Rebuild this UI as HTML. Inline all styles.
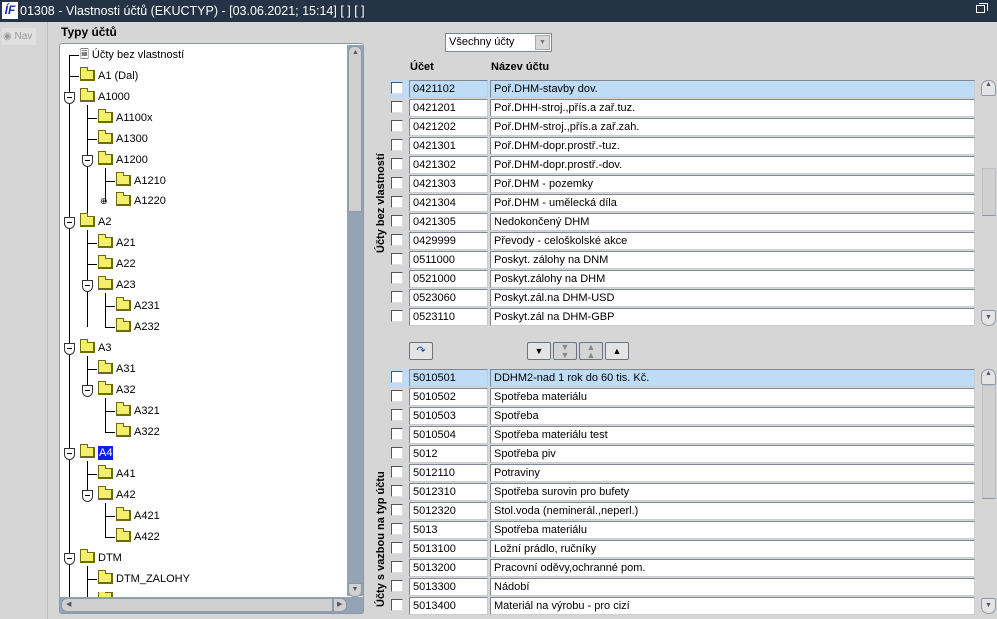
<!DOCTYPE html>
<html><head><meta charset="utf-8"><style>
*{margin:0;padding:0;box-sizing:border-box}
body{width:997px;height:619px;background:#d6d6d6;font-family:"Liberation Sans",Arial,sans-serif;font-size:11px;position:relative;overflow:hidden;color:#000}
.a{position:absolute}
#title{left:0;top:0;width:997px;height:22px;background:#243446;color:#fff;font-size:12.5px;line-height:22px;padding-left:20px;white-space:nowrap}
#logo{left:2px;top:2px;width:16px;height:17px;background:#fff;border:1px solid #fff;color:#1a2fb0;font-weight:bold;font-style:italic;font-size:12px;line-height:15px;text-align:center}
.tr{height:16px;line-height:16px;font-size:11px;white-space:nowrap}
.fo{display:inline-block;width:15px;height:11px;background:#f4ef6a;border:1px solid #6d6a10;border-right-width:2px;border-bottom-width:2px;vertical-align:-2px;margin-right:3px;position:relative}
.fo:before{content:"";position:absolute;left:-1px;top:-4px;width:6px;height:3px;background:#f4ef6a;border:1px solid #6d6a10;border-bottom:0}
.ln{background:#000}
.exp{width:11px;height:12px;border:1px solid #333;border-radius:0 0 6px 6px;background:#fff}
.exp:after{content:"";position:absolute;left:2px;top:4px;width:5px;height:1px;background:#000}
.cb{width:12px;height:12px;background:#fff;border:1px solid #555;border-right-color:#ddd;border-bottom-color:#ddd}
.c1,.c2{height:18px;background:#fff;border:1px solid #7d8796;border-right-color:#ccc;border-bottom-color:#ccc;line-height:16px;padding-left:3px;font-size:11px;white-space:nowrap}
.c1{left:409px;width:79px}.c2{left:490px;width:485px}
.sel{background:#bfdcf6}
.btn{width:24px;height:18px;border:1px solid #6b7480;border-radius:2px;background:#e4e4e4}
.sb{border:1px solid #8e99a8;border-radius:7px;background:#e4e4e4;width:15px;height:16px}
</style></head><body>
<div class="a" id="title">01308 - Vlastnosti účtů (EKUCTYP) - [03.06.2021; 15:14]  [ ]  [ ]</div>
<div class="a" id="logo">ÍF</div>
<div class="a" style="right:12px;top:5px;width:9px;height:8px;border:1px solid #fff"></div>
<div class="a" style="right:9px;top:3px;width:9px;height:8px;border-top:1px solid #fff;border-right:1px solid #fff"></div>
<div class="a" style="left:0;top:22px;width:48px;height:597px;background:#d6d6d6;border-right:1px solid #c0c0c0"></div>
<div class="a" style="left:2px;top:28px;width:34px;height:17px;background:#e0e0e0;color:#9a9a9a;font-size:10px;line-height:17px;padding-left:1px;white-space:nowrap">◉ Nav</div>
<div class="a" style="left:61px;top:25px;font-weight:bold;font-size:12px">Typy účtů</div>
<!-- tree panel -->
<div class="a" style="left:59px;top:43px;width:305px;height:571px;background:#fff;border:1px solid #8e99a8;border-radius:3px"></div>
<div class="a" style="left:347px;top:45px;width:16px;height:551px;background:#95a3b6"></div>
<div class="a" style="left:348px;top:46px;width:14px;height:166px;background:#d0d0d0;border:1px solid #8e99a8;border-radius:6px 6px 0 0"></div>
<div class="a" style="left:352px;top:49px;font-size:7px;color:#556">▲</div>
<div class="a" style="left:348px;top:583px;width:14px;height:14px;background:#d0d0d0;border:1px solid #8e99a8;border-radius:0 0 6px 6px;font-size:7px;color:#556;text-align:center;line-height:12px">▼</div>
<div class="a" style="left:60px;top:597px;width:303px;height:16px;background:#95a3b6"></div>
<div class="a" style="left:61px;top:598px;width:272px;height:14px;background:#d0d0d0;border:1px solid #8e99a8;border-radius:6px 0 0 6px;font-size:7px;color:#556;line-height:12px;padding-left:4px">◀</div>
<div class="a" style="left:333px;top:598px;width:14px;height:14px;background:#d0d0d0;border:1px solid #8e99a8;border-radius:0 6px 6px 0;font-size:7px;color:#556;line-height:12px;padding-left:3px">▶</div>
<!-- tree lines -->
<div class="a ln" style="left:69px;top:55px;width:1px;height:542px"></div>
<div class="a ln" style="left:87px;top:105px;width:1px;height:115px"></div>
<div class="a ln" style="left:105px;top:168px;width:1px;height:34px"></div>
<div class="a ln" style="left:87px;top:230px;width:1px;height:97px"></div>
<div class="a ln" style="left:105px;top:293px;width:1px;height:34px"></div>
<div class="a ln" style="left:87px;top:356px;width:1px;height:34px"></div>
<div class="a ln" style="left:105px;top:398px;width:1px;height:34px"></div>
<div class="a ln" style="left:87px;top:461px;width:1px;height:34px"></div>
<div class="a ln" style="left:105px;top:503px;width:1px;height:34px"></div>
<div class="a ln" style="left:87px;top:566px;width:1px;height:31px"></div>
<!-- tree rows -->
<div class="a ln" style="left:69px;top:55px;width:10px;height:1px"></div><div class="a tr" style="left:80px;top:47px">🗏 Účty bez vlastností</div>
<div class="a ln" style="left:69px;top:76px;width:10px;height:1px"></div><div class="a tr" style="left:80px;top:68px"><span class="fo"></span>A1 (Dal)</div>
<div class="a exp" style="left:64px;top:92px"></div><div class="a tr" style="left:80px;top:89px"><span class="fo"></span>A1000</div>
<div class="a ln" style="left:87px;top:118px;width:10px;height:1px"></div><div class="a tr" style="left:98px;top:110px"><span class="fo"></span>A1100x</div>
<div class="a ln" style="left:87px;top:139px;width:10px;height:1px"></div><div class="a tr" style="left:98px;top:131px"><span class="fo"></span>A1300</div>
<div class="a exp" style="left:82px;top:155px"></div><div class="a tr" style="left:98px;top:152px"><span class="fo"></span>A1200</div>
<div class="a ln" style="left:105px;top:181px;width:10px;height:1px"></div><div class="a tr" style="left:116px;top:173px"><span class="fo"></span>A1210</div>
<div class="a tr" style="left:100px;top:193px;font-size:9px">⊕</div><div class="a tr" style="left:116px;top:193px"><span class="fo"></span>A1220</div>
<div class="a exp" style="left:64px;top:217px"></div><div class="a tr" style="left:80px;top:214px"><span class="fo"></span>A2</div>
<div class="a ln" style="left:87px;top:243px;width:10px;height:1px"></div><div class="a tr" style="left:98px;top:235px"><span class="fo"></span>A21</div>
<div class="a ln" style="left:87px;top:264px;width:10px;height:1px"></div><div class="a tr" style="left:98px;top:256px"><span class="fo"></span>A22</div>
<div class="a exp" style="left:82px;top:280px"></div><div class="a tr" style="left:98px;top:277px"><span class="fo"></span>A23</div>
<div class="a ln" style="left:105px;top:306px;width:10px;height:1px"></div><div class="a tr" style="left:116px;top:298px"><span class="fo"></span>A231</div>
<div class="a ln" style="left:105px;top:327px;width:10px;height:1px"></div><div class="a tr" style="left:116px;top:319px"><span class="fo"></span>A232</div>
<div class="a exp" style="left:64px;top:343px"></div><div class="a tr" style="left:80px;top:340px"><span class="fo"></span>A3</div>
<div class="a ln" style="left:87px;top:369px;width:10px;height:1px"></div><div class="a tr" style="left:98px;top:361px"><span class="fo"></span>A31</div>
<div class="a exp" style="left:82px;top:385px"></div><div class="a tr" style="left:98px;top:382px"><span class="fo"></span>A32</div>
<div class="a ln" style="left:105px;top:411px;width:10px;height:1px"></div><div class="a tr" style="left:116px;top:403px"><span class="fo"></span>A321</div>
<div class="a ln" style="left:105px;top:432px;width:10px;height:1px"></div><div class="a tr" style="left:116px;top:424px"><span class="fo"></span>A322</div>
<div class="a exp" style="left:64px;top:448px"></div><div class="a tr" style="left:80px;top:445px"><span class="fo"></span><span style="background:#0a1ee8;color:#fff;padding:1px 1px;outline:1px dotted #fff">A4</span></div>
<div class="a ln" style="left:87px;top:474px;width:10px;height:1px"></div><div class="a tr" style="left:98px;top:466px"><span class="fo"></span>A41</div>
<div class="a exp" style="left:82px;top:490px"></div><div class="a tr" style="left:98px;top:487px"><span class="fo"></span>A42</div>
<div class="a ln" style="left:105px;top:516px;width:10px;height:1px"></div><div class="a tr" style="left:116px;top:508px"><span class="fo"></span>A421</div>
<div class="a ln" style="left:105px;top:537px;width:10px;height:1px"></div><div class="a tr" style="left:116px;top:529px"><span class="fo"></span>A422</div>
<div class="a exp" style="left:64px;top:553px"></div><div class="a tr" style="left:80px;top:550px"><span class="fo"></span>DTM</div>
<div class="a ln" style="left:87px;top:579px;width:10px;height:1px"></div><div class="a tr" style="left:98px;top:571px"><span class="fo"></span>DTM_ZALOHY</div>
<div class="a" style="left:98px;top:592px;width:20px;height:5px;overflow:hidden"><span class="fo"></span></div>

<!-- combo -->
<div class="a" style="left:445px;top:33px;width:107px;height:19px;background:#fff;border:1px solid #7d8796;font-size:11px;line-height:17px;padding-left:3px">Všechny účty</div>
<div class="a" style="left:535px;top:35px;width:15px;height:15px;background:#d8d8d8;border:1px solid #aaa;font-size:7px;color:#777;text-align:center;line-height:13px">▼</div>
<div class="a" style="left:410px;top:61px;font-weight:bold;font-size:11px">Účet</div>
<div class="a" style="left:491px;top:61px;font-weight:bold;font-size:11px">Název účtu</div>

<div class="a" style="left:373px;top:80px;width:16px;height:246px;writing-mode:vertical-rl;transform:rotate(180deg);font-weight:bold;font-size:11px;text-align:center;line-height:16px">Účty bez vlastností</div>
<div class="a" style="left:373px;top:369px;width:16px;height:238px;writing-mode:vertical-rl;transform:rotate(180deg);font-weight:bold;font-size:11px;text-align:left;line-height:16px">Účty s vazbou na typ účtu</div>

<!-- top table -->
<div class="a sel" style="left:389px;top:80px;width:587px;height:18px"></div>
<div class="a cb" style="left:391px;top:82px"></div><div class="a c1 sel" style="top:80px">0421102</div><div class="a c2 sel" style="top:80px">Poř.DHM-stavby dov.</div>
<div class="a cb" style="left:391px;top:101px"></div><div class="a c1" style="top:99px">0421201</div><div class="a c2" style="top:99px">Poř.DHH-stroj.,přís.a zař.tuz.</div>
<div class="a cb" style="left:391px;top:120px"></div><div class="a c1" style="top:118px">0421202</div><div class="a c2" style="top:118px">Poř.DHM-stroj.,přís.a zař.zah.</div>
<div class="a cb" style="left:391px;top:139px"></div><div class="a c1" style="top:137px">0421301</div><div class="a c2" style="top:137px">Poř.DHM-dopr.prostř.-tuz.</div>
<div class="a cb" style="left:391px;top:158px"></div><div class="a c1" style="top:156px">0421302</div><div class="a c2" style="top:156px">Poř.DHM-dopr.prostř.-dov.</div>
<div class="a cb" style="left:391px;top:177px"></div><div class="a c1" style="top:175px">0421303</div><div class="a c2" style="top:175px">Poř.DHM - pozemky</div>
<div class="a cb" style="left:391px;top:196px"></div><div class="a c1" style="top:194px">0421304</div><div class="a c2" style="top:194px">Poř.DHM - umělecká díla</div>
<div class="a cb" style="left:391px;top:215px"></div><div class="a c1" style="top:213px">0421305</div><div class="a c2" style="top:213px">Nedokončený DHM</div>
<div class="a cb" style="left:391px;top:234px"></div><div class="a c1" style="top:232px">0429999</div><div class="a c2" style="top:232px">Převody - celoškolské akce</div>
<div class="a cb" style="left:391px;top:253px"></div><div class="a c1" style="top:251px">0511000</div><div class="a c2" style="top:251px">Poskyt. zálohy na DNM</div>
<div class="a cb" style="left:391px;top:272px"></div><div class="a c1" style="top:270px">0521000</div><div class="a c2" style="top:270px">Poskyt.zálohy na DHM</div>
<div class="a cb" style="left:391px;top:291px"></div><div class="a c1" style="top:289px">0523060</div><div class="a c2" style="top:289px">Poskyt.zál.na DHM-USD</div>
<div class="a cb" style="left:391px;top:310px"></div><div class="a c1" style="top:308px">0523110</div><div class="a c2" style="top:308px">Poskyt.zál na DHM-GBP</div>
<div class="a sb" style="left:981px;top:80px;border-radius:7px 7px 2px 2px;font-size:7px;text-align:center;color:#556">▲</div>
<div class="a" style="left:982px;top:168px;width:14px;height:48px;background:#d0d0d0;border:1px solid #b8c0cc;border-bottom-color:#8e99a8"></div>
<div class="a sb" style="left:981px;top:310px;border-radius:2px 2px 7px 7px;font-size:7px;text-align:center;color:#556;line-height:14px">▼</div>

<!-- buttons -->
<div class="a btn" style="left:409px;top:342px;color:#1a3ca0;font-size:11px;text-align:center;line-height:16px">↷</div>
<div class="a btn" style="left:527px;top:342px;font-size:9px;text-align:center;line-height:16px">▼</div>
<div class="a btn" style="left:553px;top:342px;font-size:9px;text-align:center;line-height:8px;color:#888;background:#d4d4d4">▼<br>▼</div>
<div class="a btn" style="left:579px;top:342px;font-size:9px;text-align:center;line-height:8px;color:#888;background:#d4d4d4">▲<br>▲</div>
<div class="a btn" style="left:605px;top:342px;font-size:9px;text-align:center;line-height:16px">▲</div>

<!-- bottom table -->
<div class="a sel" style="left:389px;top:369px;width:587px;height:18px"></div>
<div class="a cb" style="left:391px;top:371px"></div><div class="a c1 sel" style="top:369px">5010501</div><div class="a c2 sel" style="top:369px">DDHM2-nad 1 rok do 60 tis. Kč.</div>
<div class="a cb" style="left:391px;top:390px"></div><div class="a c1" style="top:388px">5010502</div><div class="a c2" style="top:388px">Spotřeba materiálu</div>
<div class="a cb" style="left:391px;top:409px"></div><div class="a c1" style="top:407px">5010503</div><div class="a c2" style="top:407px">Spotřeba</div>
<div class="a cb" style="left:391px;top:428px"></div><div class="a c1" style="top:426px">5010504</div><div class="a c2" style="top:426px">Spotřeba materiálu test</div>
<div class="a cb" style="left:391px;top:447px"></div><div class="a c1" style="top:445px">5012</div><div class="a c2" style="top:445px">Spotřeba piv</div>
<div class="a cb" style="left:391px;top:466px"></div><div class="a c1" style="top:464px">5012110</div><div class="a c2" style="top:464px">Potraviny</div>
<div class="a cb" style="left:391px;top:485px"></div><div class="a c1" style="top:483px">5012310</div><div class="a c2" style="top:483px">Spotřeba surovin pro bufety</div>
<div class="a cb" style="left:391px;top:504px"></div><div class="a c1" style="top:502px">5012320</div><div class="a c2" style="top:502px">Stol.voda (neminerál.,neperl.)</div>
<div class="a cb" style="left:391px;top:523px"></div><div class="a c1" style="top:521px">5013</div><div class="a c2" style="top:521px">Spotřeba materiálu</div>
<div class="a cb" style="left:391px;top:542px"></div><div class="a c1" style="top:540px">5013100</div><div class="a c2" style="top:540px">Ložní prádlo, ručníky</div>
<div class="a cb" style="left:391px;top:561px"></div><div class="a c1" style="top:559px">5013200</div><div class="a c2" style="top:559px">Pracovní oděvy,ochranné pom.</div>
<div class="a cb" style="left:391px;top:580px"></div><div class="a c1" style="top:578px">5013300</div><div class="a c2" style="top:578px">Nádobí</div>
<div class="a cb" style="left:391px;top:599px"></div><div class="a c1" style="top:597px">5013400</div><div class="a c2" style="top:597px">Materiál na výrobu - pro cizí</div>
<div class="a sb" style="left:981px;top:369px;border-radius:7px 7px 2px 2px;font-size:7px;text-align:center;color:#556">▲</div>
<div class="a" style="left:982px;top:385px;width:14px;height:114px;background:#d0d0d0;border:1px solid #b8c0cc;border-bottom-color:#8e99a8"></div>
<div class="a sb" style="left:981px;top:598px;border-radius:2px 2px 7px 7px;font-size:7px;text-align:center;color:#556;line-height:14px">▼</div>
</body></html>
